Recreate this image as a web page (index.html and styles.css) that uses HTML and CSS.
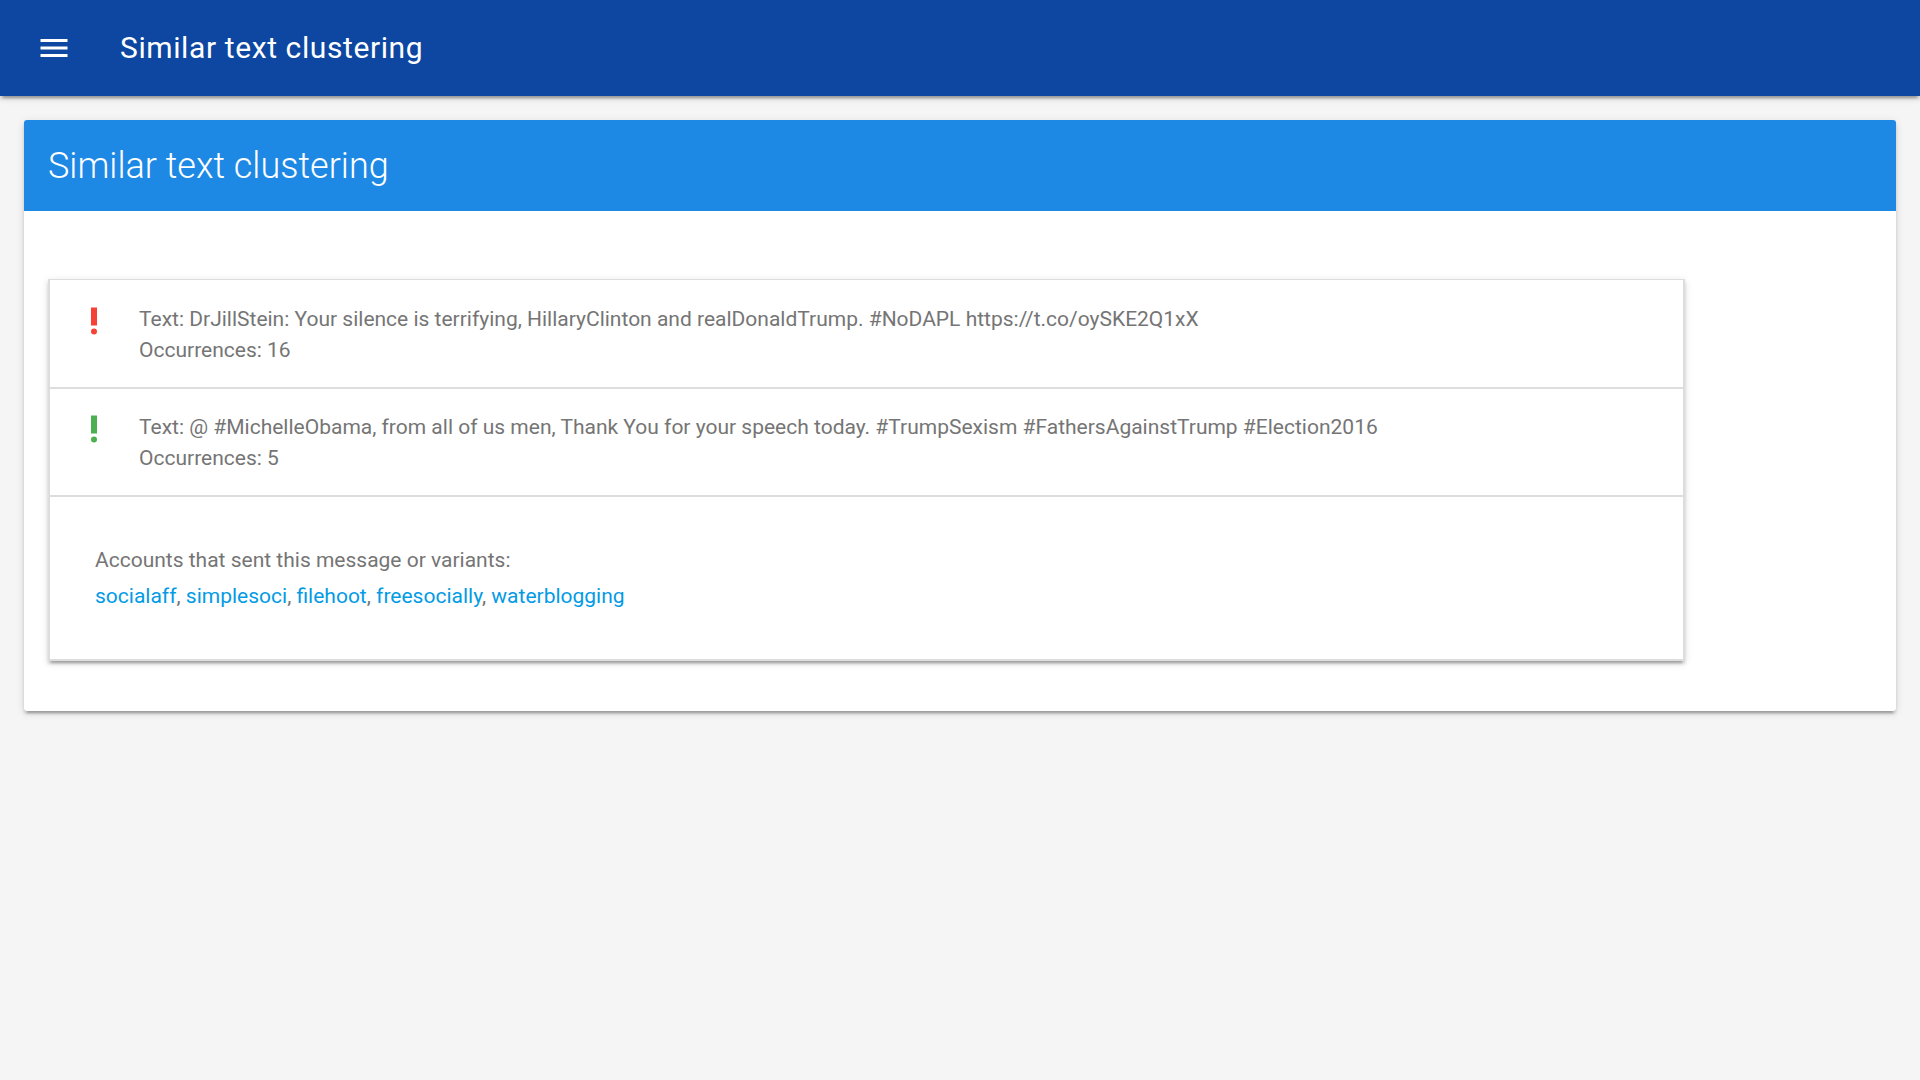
FILE: index.html
```html
<!DOCTYPE html>
<html lang="en">
<head>
<meta charset="utf-8">
<meta name="viewport" content="width=device-width, initial-scale=1">
<title>Similar text clustering</title>
<link rel="stylesheet" href="styles.css">
</head>
<body>
<header class="app-bar">
  <button class="menu-button" type="button" aria-label="Open menu">
    <svg viewBox="0 0 24 24" aria-hidden="true"><path d="M3 18h18v-2H3v2zm0-5h18v-2H3v2zm0-7v2h18V6H3z"/></svg>
  </button>
  <span class="app-title">Similar text clustering</span>
</header>
<main class="page">
  <section class="card">
    <div class="card-header">
      <h1 class="card-title">Similar text clustering</h1>
    </div>
    <div class="card-body">
      <ul class="clusters">
        <li class="cluster">
          <svg class="icon icon-high" viewBox="0 0 24 24" aria-hidden="true"><circle cx="12" cy="19" r="2"/><path d="M10 3h4v12h-4z"/></svg>
          <p class="cluster-text">Text: DrJillStein: Your silence is terrifying, HillaryClinton and realDonaldTrump. #NoDAPL https://t.co/oySKE2Q1xX<br>Occurrences: 16</p>
        </li>
        <li class="cluster">
          <svg class="icon icon-low" viewBox="0 0 24 24" aria-hidden="true"><circle cx="12" cy="19" r="2"/><path d="M10 3h4v12h-4z"/></svg>
          <p class="cluster-text">Text: @ #MichelleObama, from all of us men, Thank You for your speech today. #TrumpSexism #FathersAgainstTrump #Election2016<br>Occurrences: 5</p>
        </li>
        <li class="accounts">
          <p class="accounts-text">Accounts that sent this message or variants:<br><a href="#socialaff">socialaff</a>, <a href="#simplesoci">simplesoci</a>, <a href="#filehoot">filehoot</a>, <a href="#freesocially">freesocially</a>, <a href="#waterblogging">waterblogging</a></p>
        </li>
      </ul>
    </div>
  </section>
</main>
</body>
</html>
```
FILE: styles.css
```css
:root {
  --shadow: 0 3px 3px rgba(0, 0, 0, .14), 0 5px 2px -3px rgba(0, 0, 0, .2), 0 2px 8px rgba(0, 0, 0, .12);
}

* {
  box-sizing: border-box;
}

body {
  margin: 0;
  background: #f5f5f5;
  color: #757575;
  font-family: Roboto, "Liberation Sans", sans-serif;
  font-size: 21px;
}

.app-bar {
  display: flex;
  align-items: center;
  gap: 48px;
  height: 96px;
  padding: 0 36px;
  background: #0d47a1;
  color: #fff;
  box-shadow: var(--shadow);
}

.menu-button {
  display: flex;
  padding: 0;
  border: 0;
  background: none;
  color: inherit;
  cursor: pointer;
}

.menu-button svg,
.icon {
  flex: none;
  width: 36px;
  height: 36px;
  fill: currentColor;
}

.app-title {
  font-size: 30px;
  line-height: 36px;
  letter-spacing: .02em;
}

.page {
  padding: 24px;
}

.card {
  border-radius: 3px;
  background: #fff;
  box-shadow: var(--shadow);
}

.card-header {
  padding: 25px 24px 23px;
  border-radius: 3px 3px 0 0;
  background: #1e88e5;
  color: #fff;
}

.card-title {
  margin: 0;
  font-size: 36px;
  font-weight: 300;
  line-height: 43px;
}

.card-body {
  padding: 68px 211px 50px 24px;
}

.clusters {
  margin: 0;
  padding: 1px 0 0;
  border: 2px solid #ddd;
  border-top-width: 1px;
  list-style: none;
  box-shadow: var(--shadow);
}

.cluster {
  display: flex;
  gap: 27px;
  padding: 22px 26px 21px;
  border-bottom: 2px solid #ddd;
}

.cluster-text,
.accounts-text {
  margin: 0;
}

.cluster-text {
  padding-top: 1px;
  line-height: 31px;
}

.icon-high {
  color: #f44336;
}

.icon-low {
  color: #4caf50;
}

.accounts {
  padding: 45px;
}

.accounts-text {
  line-height: 36px;
}

.accounts a {
  color: #039be5;
  text-decoration: none;
}
```
